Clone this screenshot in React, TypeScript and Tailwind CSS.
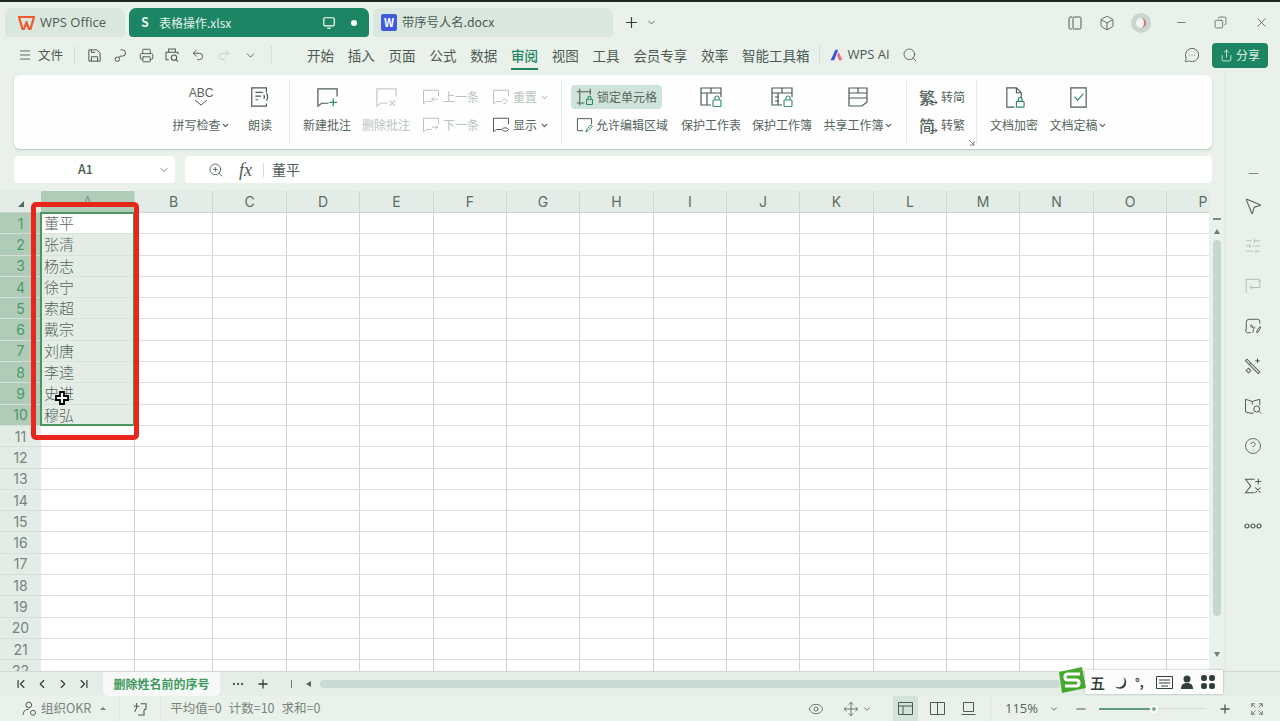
import React from 'react';
import {
  ChevronDown, Plus, Minus, X, Copy, Box, Search, Printer, Undo2, Redo2, Eye, Menu,
  MessageCircleMore, Share, MousePointer2, SlidersHorizontal, CircleHelp, Ellipsis,
  ChevronLeft, ChevronRight, ChevronFirst, ChevronLast, Expand, ZoomIn, Move,
} from 'lucide-react';

const INK = '#4b5b53';

// comment shaped base used by most of the review buttons
const Note = ({ size = 20, color = INK, children }: { size?: number; color?: string; children?: React.ReactNode }) => (
  <svg width={size} height={size} viewBox="0 0 24 24" fill="none" stroke={color} strokeWidth="1.3">
    <path d="M13 18H6l-4 3V3h20v8" />
    {children}
  </svg>
);

const TableLock = ({ variant = 0 }: { variant?: number }) => (
  <svg width="24" height="24" viewBox="0 0 24 24" fill="none" stroke={INK} strokeWidth="1.2">
    {variant === 2 ? (
      <path d="M3 3h18v14l-5 4H3zM3 8h18M3 13h18M12 3v5" />
    ) : (
      <path d="M12 20H2V3h20v9M2 8h20M8 8v12M12 3v5" />
    )}
    {variant === 1 && <path d="M5 12h4M5 16h4" />}
    {variant !== 2 && (
      <g stroke="#3d9270">
        <rect x="14" y="15" width="8" height="6.5" rx="1" />
        <path d="M16 15v-2a2 2 0 0 1 4 0v2" />
      </g>
    )}
  </svg>
);

const Big = ({ w, icon, label, caret, dim }: { w: string; icon: React.ReactNode; label: string; caret?: boolean; dim?: boolean }) => (
  <div className={`${w} flex flex-col items-center shrink-0`}>
    <div className="h-[24px] mt-[10px] flex items-center">{icon}</div>
    <div className={`mt-[7px] flex items-center text-[12px] whitespace-nowrap ${dim ? 'text-[#b9c4be]' : 'text-[#56655d]'}`}>
      {label}
      {caret && <ChevronDown size={9} strokeWidth={3} color={INK} />}
    </div>
  </div>
);

const Small = ({ icon, label, caret, dim }: { icon: React.ReactNode; label: string; caret?: boolean; dim?: boolean }) => (
  <div className={`h-[24px] flex items-center gap-[3px] text-[12px] whitespace-nowrap ${dim ? 'text-[#b9c4be]' : 'text-[#56655d]'}`}>
    {icon}
    {label}
    {caret && <ChevronDown size={9} strokeWidth={3} color={dim ? '#b9c4be' : INK} />}
  </div>
);

const Sep = () => <div className="w-px bg-[#e3eae5] my-[6px] shrink-0" />;

const Convert = ({ glyph }: { glyph: string }) => (
  <span className="relative w-[19px] text-[16px] font-medium leading-none">
    {glyph}
    <svg className="absolute right-0 bottom-0" width="7" height="5" viewBox="0 0 7 5" fill="none" stroke={INK}>
      <path d="M0 2.500h6M4 .5l2 2-2 2" />
    </svg>
  </span>
);

const cols = ['A', 'B', 'C', 'D', 'E', 'F', 'G', 'H', 'I', 'J', 'K', 'L', 'M', 'N', 'O', 'P'];
const names = ['董平', '张清', '杨志', '徐宁', '索超', '戴宗', '刘唐', '李逵', '史进', '穆弘'];
const rows = Array.from({ length: 22 }, (_, i) => i + 1);
const gridCols = 'grid-cols-[41px_94px_78px_74px_73px_74px_73px_73px_74px_73px_73px_74px_73px_73px_74px_73px_73px]';
const menus = ['开始', '插入', '页面', '公式', '数据', '审阅', '视图', '工具', '会员专享', '效率', '智能工具箱'];

const IconBox = ({ children }: { children: React.ReactNode }) => (
  <div className="w-[26px] flex justify-center shrink-0">{children}</div>
);

const SideIcon = ({ children }: { children: React.ReactNode }) => (
  <div className="h-[40px] flex items-center justify-center">{children}</div>
);

export default function App() {
  return (
    <div
      className="w-[1280px] h-[721px] flex flex-col overflow-hidden bg-[#e9f1ea] text-[#4b5b53] border-t-2 border-[#1c2622] relative"
      style={{ fontFamily: '"Noto Sans CJK SC", "Noto Sans", sans-serif' }}
    >
      {/* title bar */}
      <div className="h-[35px] flex items-end pl-[5px] shrink-0">
        <div className="w-[120px] h-[29px] bg-[#dae7df] rounded-t-[7px] rounded-b-[4px] flex items-center pl-[13px] gap-[5px] text-[13px]">
          <svg width="17" height="14" viewBox="0 0 17 14" fill="none" stroke="#ee5a2c" strokeWidth="2.2" strokeLinejoin="round">
            <path d="M1 1h15l-3.500 12H11L8.500 6 6 13H4.500z" />
          </svg>
          <span style={{ fontFamily: '"Open Sans", sans-serif' }}>WPS Office</span>
        </div>
        <div className="ml-[4px] w-[240px] h-[29px] bg-[#1c8564] rounded-t-[7px] rounded-b-[4px] flex items-center pl-[12px] pr-[12px] text-[#e3f2ec] text-[12px]">
          <span className="font-bold w-[18px] text-[12.5px]">S</span>
          <span>表格操作.xlsx</span>
          <svg className="ml-auto" width="14" height="14" viewBox="0 0 24 24" fill="none" stroke="#ffffff" strokeWidth="2">
            <rect x="3" y="3" width="18" height="14" rx="2" />
            <path d="M9 21h6" />
          </svg>
          <div className="ml-[15px] w-[6px] h-[6px] rounded-full bg-white" />
        </div>
        <div className="ml-[4px] w-[240px] h-[29px] bg-[#dae7df] rounded-t-[7px] rounded-b-[4px] flex items-center pl-[8px] gap-[5px] text-[12.3px]">
          <div className="w-[16px] h-[17px] bg-[#3f5bd9] rounded-[2px] text-white text-[11px] font-bold flex items-center justify-center">W</div>
          带序号人名.docx
        </div>
        <div className="ml-[10px] h-[29px] flex items-center gap-[6px]">
          <Plus size={17} strokeWidth={1.6} color="#2f3b35" />
          <ChevronDown size={11} strokeWidth={2} />
        </div>
        <div className="ml-auto h-[29px] flex items-center pr-[11px]">
          <svg width="16" height="16" viewBox="0 0 24 24" fill="none" stroke={INK} strokeWidth="1.5">
            <path d="M8 3H5a2 2 0 0 0-2 2v14a2 2 0 0 0 2 2h3" />
            <rect x="9" y="3" width="12" height="18" rx="2" />
            <path d="M15 17h.5" />
          </svg>
          <Box className="ml-[16px]" size={16} strokeWidth={1.3} />
          <div className="ml-[16px] w-[20px] h-[20px] rounded-full bg-[#c9d5ce] flex items-center justify-center">
            <div className="w-[10px] h-[10px] rounded-full bg-[#f2f4f3] border-r-2 border-[#d8746a]" />
          </div>
          <Minus className="ml-[24px]" size={13} strokeWidth={1.4} />
          <Copy className="ml-[26px] -scale-x-100" size={13} strokeWidth={1.4} />
          <X className="ml-[27px]" size={15} strokeWidth={1.3} />
        </div>
      </div>

      {/* menu bar */}
      <div className="h-[36px] flex items-center pl-[12px] shrink-0">
        <IconBox><Menu size={14} strokeWidth={1.5} /></IconBox>
        <span className="text-[12.5px] w-[26px]">文件</span>
        <div className="ml-[10px] mr-[6px] w-px h-[18px] bg-[#d5dfd9]" />
        <IconBox>
          <svg width="15" height="15" viewBox="0 0 24 24" fill="none" stroke={INK} strokeWidth="1.6">
            <path d="M3 3h13l5 5v13H3zM7 21v-7h10v7M7 3v4h6" />
          </svg>
        </IconBox>
        <IconBox>
          <svg width="15" height="15" viewBox="0 0 24 24" fill="none" stroke={INK} strokeWidth="1.6">
            <path d="M12 3h3a5 5 0 0 1 0 10h-4l-1 2" />
            <circle cx="7" cy="18" r="3.5" />
          </svg>
        </IconBox>
        <IconBox><Printer size={15} strokeWidth={1.5} /></IconBox>
        <IconBox>
          <svg width="16" height="16" viewBox="0 0 24 24" fill="none" stroke={INK} strokeWidth="1.6">
            <path d="M7 8V3h10v5M7 19H3V8h18v3" />
            <circle cx="15" cy="16" r="4" />
            <path d="M18 19l3 3" />
          </svg>
        </IconBox>
        <IconBox><Undo2 size={14} strokeWidth={1.6} /></IconBox>
        <IconBox><Redo2 size={14} strokeWidth={1.6} color="#c0cbc5" /></IconBox>
        <IconBox><ChevronDown size={13} strokeWidth={1.6} /></IconBox>
        <div className="ml-[8px] w-px h-[18px] bg-[#d5dfd9]" />
        <div className="ml-[35px] flex items-center gap-[13.800px] text-[13.5px]">
          {menus.map((m) => (
            <div key={m} className={`relative h-[36px] flex items-center whitespace-nowrap ${m === '审阅' ? 'text-[#1c8564] font-medium' : ''}`}>
              {m}
              {m === '审阅' && <div className="absolute left-0 right-0 bottom-[3px] h-[2px] bg-[#1c8564]" />}
            </div>
          ))}
        </div>
        <div className="ml-[10px] w-px h-[18px] bg-[#d5dfd9]" />
        <div className="ml-[9px] flex items-center gap-[3px] text-[13px]">
          <svg width="15" height="14" viewBox="0 0 24 24">
            <path d="M10 3h5l-7 18H2z" fill="#3558d8" />
            <path d="M13 12l3-5 6 14h-6z" fill="#e86a8d" />
          </svg>
          <span style={{ fontFamily: '"Open Sans", sans-serif' }}>WPS AI</span>
        </div>
        <Search className="ml-[12px]" size={16} strokeWidth={1.3} />
        <MessageCircleMore className="ml-auto" size={16} strokeWidth={1.3} />
        <div className="ml-[12px] mr-[12px] w-[56px] h-[25px] bg-[#1c8564] rounded-[4px] flex items-center justify-center gap-[3px] text-[12px] text-[#dcefe6]">
          <Share size={13} strokeWidth={1.6} />
          分享
        </div>
      </div>

      <div className="flex-1 flex min-h-0">
        <div className="w-[1225px] flex flex-col shrink-0">
          {/* ribbon */}
          <div className="mt-[2px] ml-[14px] mr-[13px] h-[74px] bg-[#fdfefd] rounded-[6px] shadow-[0_1px_2px_rgba(90,120,105,0.35)] flex pl-[156px] relative shrink-0">
            <Big
              w="w-[62px]"
              label="拼写检查"
              caret
              icon={
                <div className="flex flex-col items-center leading-none text-[12px] text-[#55645c]">
                  <span style={{ fontFamily: '"Liberation Sans", sans-serif' }}>ABC</span>
                  <svg width="16" height="8" viewBox="0 0 16 8" fill="none" stroke={INK}><path d="M2 1l6 5 6-5" /></svg>
                </div>
              }
            />
            <Big
              w="w-[50px] ml-[3px]"
              label="朗读"
              icon={
                <svg width="22" height="22" viewBox="0 0 24 24" fill="none" stroke={INK} strokeWidth="1.3">
                  <path d="M19 7V2H3v20h16v-3M7 7h8M7 11h6M7 15h3" />
                  <path d="M16 10a3 3 0 0 1 0 4M19 8a7 7 0 0 1 0 8" />
                </svg>
              }
            />
            <div className="w-[4px] shrink-0" />
            <Sep />
            <div className="w-[9px] shrink-0" />
            <Big w="w-[56px]" label="新建批注" icon={<Note size={23}><path d="M18 13v8M14 17h8" stroke="#2c8a66" /></Note>} />
            <Big w="w-[56px] ml-[3px]" label="删除批注" dim icon={<Note size={23} color="#c3cdc8"><path d="M15 15l6 6M21 15l-6 6" /></Note>} />
            <div className="ml-[8px] w-[70px] pt-[10px] shrink-0">
              <Small dim label="上一条" icon={<Note size={18} color="#b9c4be"><path d="M21 15H13M16 12l-3 3 3 3" /></Note>} />
              <div className="h-[4px]" />
              <Small dim label="下一条" icon={<Note size={18} color="#b9c4be"><path d="M13 15h8M18 12l3 3-3 3" /></Note>} />
            </div>
            <div className="w-[60px] pt-[10px] shrink-0">
              <Small dim caret label="重置" icon={<Note size={18} color="#b9c4be"><path d="M15 20a3 3 0 1 0-1-3" /></Note>} />
              <div className="h-[4px]" />
              <Small caret label="显示" icon={<Note size={18}><path d="M13 18c2-3 7-3 9 0-2 3-7 3-9 0z" /></Note>} />
            </div>
            <div className="w-[9px] shrink-0" />
            <Sep />
            <div className="ml-[9px] w-[97px] pt-[10px] shrink-0">
              <div className="w-[91px] h-[24px] rounded-[4px] bg-[#cfe3da] pl-[5px]">
                <Small
                  label="锁定单元格"
                  icon={
                    <svg width="18" height="18" viewBox="0 0 24 24" fill="none" stroke={INK} strokeWidth="1.4">
                      <path d="M5 1v22M1 5h19M19 1v8M1 20h10" />
                      <rect x="14" y="15" width="8" height="7" rx="1" stroke="#2c8a66" />
                      <path d="M16 15v-2a2 2 0 0 1 4 0v2" stroke="#2c8a66" />
                    </svg>
                  }
                />
              </div>
              <div className="h-[4px]" />
              <div className="pl-[5px]">
                <Small
                  label="允许编辑区域"
                  icon={
                    <svg width="18" height="18" viewBox="0 0 24 24" fill="none" stroke={INK} strokeWidth="1.4">
                      <path d="M10 20H2V3h20v8" />
                      <path d="M14 22l1-4 6-6 2 2-6 6z" stroke="#2c8a66" />
                    </svg>
                  }
                />
              </div>
            </div>
            <Big w="w-[66px] ml-[10px]" label="保护工作表" icon={<TableLock />} />
            <Big w="w-[66px] ml-[5px]" label="保护工作簿" icon={<TableLock variant={1} />} />
            <Big w="w-[72px] ml-[7px]" label="共享工作簿" caret icon={<TableLock variant={2} />} />
            <div className="w-[12px] shrink-0" />
            <Sep />
            <div className="ml-[12px] w-[57px] pt-[10px] shrink-0">
              <Small label="转简" icon={<Convert glyph="繁" />} />
              <div className="h-[4px]" />
              <Small label="转繁" icon={<Convert glyph="简" />} />
            </div>
            <Sep />
            <Big
              w="w-[60px] ml-[7px]"
              label="文档加密"
              icon={
                <svg width="23" height="23" viewBox="0 0 24 24" fill="none" stroke={INK} strokeWidth="1.2">
                  <path d="M12 22H4V2h10l5 5v6M14 2v5h5" />
                  <rect x="14" y="16" width="8" height="6" rx="1" stroke="#2c8a66" />
                  <path d="M16 16v-2a2 2 0 0 1 4 0v2" stroke="#2c8a66" />
                </svg>
              }
            />
            <Big
              w="w-[66px] ml-px"
              label="文档定稿"
              caret
              icon={
                <svg width="23" height="23" viewBox="0 0 24 24" fill="none" stroke={INK} strokeWidth="1.2">
                  <path d="M4 2h16v20H4z" />
                  <path d="M8 11l3 4 6-7" stroke="#2c8a66" />
                </svg>
              }
            />
            <svg className="absolute left-[954px] bottom-[3px]" width="7" height="7" viewBox="0 0 7 7" fill="none" stroke="#7c8a83">
              <path d="M1 1l5 5M6 2v4H2" />
            </svg>
          </div>

          {/* formula bar */}
          <div className="mt-[7px] ml-[14px] mr-[13px] h-[27px] flex gap-[10px] shrink-0">
            <div className="w-[161px] bg-white rounded-[4px] relative flex items-center justify-center text-[12.5px] font-medium">
              <span className="mr-[18px]">A1</span>
              <ChevronDown className="absolute right-[5px] top-[8px]" size={12} strokeWidth={1.5} />
            </div>
            <div className="flex-1 bg-white rounded-[4px] flex items-center pl-[23px] text-[14px]">
              <ZoomIn size={16} strokeWidth={1.3} />
              <span className="ml-[15px] italic text-[18px] leading-none" style={{ fontFamily: '"Liberation Serif", serif' }}>fx</span>
              <div className="ml-[11px] w-px h-[14px] bg-[#d5dfd9]" />
              <span className="ml-[8px]">董平</span>
            </div>
          </div>

          {/* sheet */}
          <div className="mt-[8px] h-[480px] flex shrink-0">
            <div className="w-[1209px] relative overflow-hidden bg-white">
              <div className={`grid ${gridCols} h-[22px] bg-[#e3ece6] border-b border-[#cbd6d0]`}>
                <div className="flex items-end justify-center pb-[5px] bg-[#e3ece6]">
                  <div className="w-0 h-0 border-l-[6px] border-l-transparent border-b-[6px] border-b-[#56655d]" />
                </div>
                {cols.map((c, i) => (
                  <div
                    key={c}
                    className={`flex items-center justify-center text-[14px] border-r border-[#cfd9d3] ${i === 0 ? 'bg-[#b1cbb9] text-[#7f9c8a]' : 'text-[#5d6d64]'}`}
                    style={{ fontFamily: 'Inter, sans-serif' }}
                  >
                    {c}
                  </div>
                ))}
              </div>
              <div className={`grid ${gridCols} auto-rows-[21.3px]`}>
                {rows.map((r) => (
                  <React.Fragment key={r}>
                    <div
                      className={`flex items-center justify-center text-[14px] border-b border-[#d5dfd9] ${r <= 10 ? 'bg-[#b1cbb9] text-[#4b9a63]' : 'bg-[#e3ece6] text-[#75857c]'}`}
                      style={{ fontFamily: 'Inter, sans-serif' }}
                    >
                      {r}
                    </div>
                    {cols.map((c, i) => (
                      <div
                        key={c}
                        className={`border-b border-r border-b-[#d9e2dd] border-r-[#ccd6d1] ${i === 0 && r > 1 && r <= 10 ? 'bg-[#e3ede6]' : ''} flex items-center pl-[3px] text-[15px] text-[#55645c] font-light overflow-hidden`}
                      >
                        {i === 0 && r <= 10 ? names[r - 1] : ''}
                      </div>
                    ))}
                  </React.Fragment>
                ))}
              </div>
              {/* selection, annotation and cursor lie over the cells */}
              <div className="absolute left-[40px] top-[21px] w-[95px] h-[214px] border-2 border-[#4d9463]" />
              <div className="absolute left-[31px] top-[11px] w-[108px] h-[238px] border-[5px] border-[#e8261c] rounded-[5px]" />
              <svg className="absolute left-[55px] top-[200px]" width="14" height="14" viewBox="0 0 14 14">
                <path d="M5 1h4v4h4v4H9v4H5V9H1V5h4z" fill="#fff" stroke="#000" strokeWidth="1.8" />
              </svg>
            </div>
            {/* vertical scrollbar */}
            <div className="w-[16px] flex flex-col items-center bg-[#e9f1ea]">
              <div className="mt-[27px] w-[8px] h-[2px] bg-[#7c8a83]" />
              <div className="mt-[9px] w-0 h-0 border-l-[3px] border-r-[3px] border-b-[5px] border-l-transparent border-r-transparent border-b-[#6f7d76]" />
              <div className="mt-[6px] w-[8px] h-[376px] rounded-[4px] bg-[#c5d8d2]" />
              <div className="mt-[36px] w-0 h-0 border-l-[3px] border-r-[3px] border-t-[5px] border-l-transparent border-r-transparent border-t-[#6f7d76]" />
            </div>
          </div>
        </div>

        {/* right side panel */}
        <div className="flex-1 border-l border-[#dde6e0] flex flex-col items-center pt-[93px] text-[#55645c]">
          <div className="h-[16px] -mt-px flex items-center"><Minus size={15} strokeWidth={1.2} /></div>
          <div className="mt-[5px]">
            <SideIcon><MousePointer2 size={20} strokeWidth={1.3} /></SideIcon>
            <SideIcon><SlidersHorizontal size={18} strokeWidth={1} color="#aab7b0" /></SideIcon>
            <SideIcon>
              <svg width="18" height="18" viewBox="0 0 24 24" fill="none" stroke="#aab7b0" strokeWidth="1.2">
                <path d="M3 3h18M3 3v18M21 6v8H9M11 11l-3 3 3 3M18 7l3-3 2 3" />
              </svg>
            </SideIcon>
            <SideIcon>
              <svg width="18" height="18" viewBox="0 0 24 24" fill="none" stroke={INK} strokeWidth="1.3">
                <path d="M9 21H5a3 3 0 0 1-2-5V7a4 4 0 0 1 4-4h11a3 3 0 0 1 3 3v3" />
                <path d="M12 21c0-4 1-6 3-8M17 21c0-3 2-7 5-8-1 4-2 7-5 8zM12 14c-2 0-3-1-3-3 2 0 3 1 3 3z" />
              </svg>
            </SideIcon>
            <SideIcon>
              <svg width="18" height="18" viewBox="0 0 24 24" fill="none" stroke={INK} strokeWidth="1.4">
                <path d="M4 3l17 17-2 2L2 5zM9 8l-2 2M18 2v6M15 5h6M6 15l-3 3 3 3 3-3z" />
              </svg>
            </SideIcon>
            <SideIcon>
              <svg width="18" height="18" viewBox="0 0 24 24" fill="none" stroke={INK} strokeWidth="1.3">
                <path d="M11 6L2 3v17l9 2 2-1M11 6l10-3v8M11 6v4" />
                <circle cx="17" cy="16" r="4" />
                <path d="M20 19l3 3" />
              </svg>
            </SideIcon>
            <SideIcon><CircleHelp size={18} strokeWidth={1.2} /></SideIcon>
            <SideIcon>
              <svg width="18" height="18" viewBox="0 0 24 24" fill="none" stroke={INK} strokeWidth="1.4">
                <path d="M14 3H2l7 9-7 9h12M19 2v8M15 6h8M15 14l7 7M22 14l-7 7" />
              </svg>
            </SideIcon>
            <SideIcon>
              <svg width="18" height="6" viewBox="0 0 18 6" fill="none" stroke={INK} strokeWidth="1.2">
                <circle cx="3" cy="3" r="2" />
                <circle cx="9" cy="3" r="2" />
                <circle cx="15" cy="3" r="2" />
              </svg>
            </SideIcon>
          </div>
        </div>
      </div>

      {/* sheet tabs */}
      <div className="h-[25px] bg-[#e4ede6] flex items-center shrink-0 relative border-t border-[#cfd9d3]">
        <div className="w-[103px] pl-[14px] flex items-center gap-[7px] text-[#2f3b35]">
          <ChevronFirst size={14} strokeWidth={2} />
          <ChevronLeft size={14} strokeWidth={2} />
          <ChevronRight size={14} strokeWidth={2} />
          <ChevronLast size={14} strokeWidth={2} />
        </div>
        <div className="w-[117px] h-[24px] bg-[#f6f9f7] rounded-b-[5px] flex items-center justify-center text-[12px] font-bold text-[#3d9a5c]">
          删除姓名前的序号
        </div>
        <Ellipsis className="ml-[11px]" size={14} strokeWidth={2} />
        <Plus className="ml-[11px]" size={14} strokeWidth={2.2} color="#2f3b35" />
        <div className="ml-[21px] w-px h-[8px] bg-[#6f7d76]" />
        <div className="ml-[14px] w-0 h-0 border-t-[3px] border-b-[3px] border-r-[5px] border-t-transparent border-b-transparent border-r-[#56655d]" />
        <div className="ml-[9px] w-[740px] h-[8px] rounded-[4px] bg-[#c9dad4]" />
      </div>

      {/* status bar */}
      <div className="h-[25px] flex items-center text-[12.5px] text-[#75857c] shrink-0">
        <svg className="ml-[21px]" width="17" height="17" viewBox="0 0 24 24" fill="none" stroke={INK} strokeWidth="1.4">
          <circle cx="11" cy="7" r="4" />
          <path d="M3 21c0-5 3-8 8-8" />
          <circle cx="17" cy="18" r="3.5" />
        </svg>
        <span className="ml-[3px]">组织OKR</span>
        <div className="ml-[9px] w-0 h-0 border-l-[3px] border-r-[3px] border-b-[3px] border-l-transparent border-r-transparent border-b-[#75857c]" />
        <div className="ml-[13px] w-px h-[25px] bg-[#dde6e0]" />
        <svg className="ml-[12px]" width="16" height="16" viewBox="0 0 24 24" fill="none" stroke={INK} strokeWidth="1.6">
          <path d="M3 8h8M7 3v7l-3 6M13 4h8v8l-3 1M18 13v8H9" />
        </svg>
        <div className="ml-[12px] w-px h-[25px] bg-[#dde6e0]" />
        <span className="ml-[9px] whitespace-nowrap">平均值=0</span>
        <span className="ml-[7px] whitespace-nowrap">计数=10</span>
        <span className="ml-[7px] whitespace-nowrap">求和=0</span>
        <Eye className="ml-auto" size={16} strokeWidth={1.2} color={INK} />
        <Move className="ml-[19px]" size={16} strokeWidth={1.2} color={INK} />
        <ChevronDown className="ml-[3px]" size={10} strokeWidth={2} color={INK} />
        <div className="ml-[21px] w-[25px] h-[25px] bg-[#d3e3da] flex items-center justify-center">
          <svg width="15" height="13" viewBox="0 0 15 13" fill="none" stroke={INK}><path d="M.5.5h14v12H.5zM.5 4h14M5 4v8.500" /></svg>
        </div>
        <svg className="ml-[12px]" width="15" height="13" viewBox="0 0 15 13" fill="none" stroke={INK}><path d="M.5.5h14v12H.5zM7.500.5v12" /></svg>
        <svg className="ml-[16px]" width="15" height="13" viewBox="0 0 15 13" fill="none" stroke={INK}><path d="M.5 12.500h14M2.500 9.500V.5h10v9z" /></svg>
        <div className="ml-[14px] w-px h-[25px] bg-[#dde6e0]" />
        <span className="ml-[14px] text-[13px] text-[#56655d]" style={{ fontFamily: '"Open Sans", sans-serif' }}>115%</span>
        <ChevronDown className="ml-[11px]" size={10} strokeWidth={2} color={INK} />
        <Minus className="ml-[15px]" size={14} strokeWidth={2} color={INK} />
        <div className="ml-[11px] w-[106px] flex items-center">
          <div className="w-[51px] h-[2px] bg-[#5f9b82]" />
          <div className="w-[8px] h-[8px] rounded-full bg-[#7ea897] border-2 border-white" />
          <div className="flex-1 h-px bg-[#cfdad4]" />
        </div>
        <Plus className="ml-[13px]" size={14} strokeWidth={2.2} color={INK} />
        <Expand className="ml-[18px] mr-[16px]" size={14} strokeWidth={1.3} color={INK} />
      </div>

      {/* floating input method bar */}
      <div className="absolute left-[1085px] top-[668px] w-[138px] h-[24px] bg-[#fbfcfb] shadow-[0_0_2px_rgba(0,0,0,0.3)] flex items-center pl-[5px] gap-[7px] text-[#2f3b35]">
        <span className="text-[15px] w-[16px] leading-none font-medium">五</span>
        <svg width="15" height="15" viewBox="0 0 24 24" fill="#33403a"><path d="M16 3a10 10 0 0 1-13 15 10 10 0 0 0 18-5 10 10 0 0 0-5-10z" /></svg>
        <span className="text-[12px] w-[14px] font-bold leading-none">°,</span>
        <svg width="17" height="13" viewBox="0 0 17 13" fill="none" stroke="#33403a"><path d="M.5.5h16v12H.5zM3 4h11M3 7h11M5 10h7" /></svg>
        <svg width="14" height="15" viewBox="0 0 14 15" fill="#33403a"><circle cx="7" cy="4" r="3.500" /><path d="M1 14c0-4 2-6 6-6s6 2 6 6z" /></svg>
        <svg width="14" height="14" viewBox="0 0 14 14" fill="#33403a"><rect width="6" height="6" rx="2.500" /><rect x="8" width="6" height="6" rx="2.500" /><rect y="8" width="6" height="6" rx="2.500" /><rect x="8" y="8" width="6" height="6" rx="2.500" /></svg>
      </div>
      <svg className="absolute left-[1058px] top-[664px]" width="28" height="28" viewBox="0 0 28 28">
        <path d="M1 6L24 1l4 21-24 5z" fill="#46a82f" />
        <path d="M22 8H10c-4 0-4 6 0 6h8c4 0 4 6 0 6H7" fill="none" stroke="#fff" strokeWidth="3.2" />
      </svg>
    </div>
  );
}
